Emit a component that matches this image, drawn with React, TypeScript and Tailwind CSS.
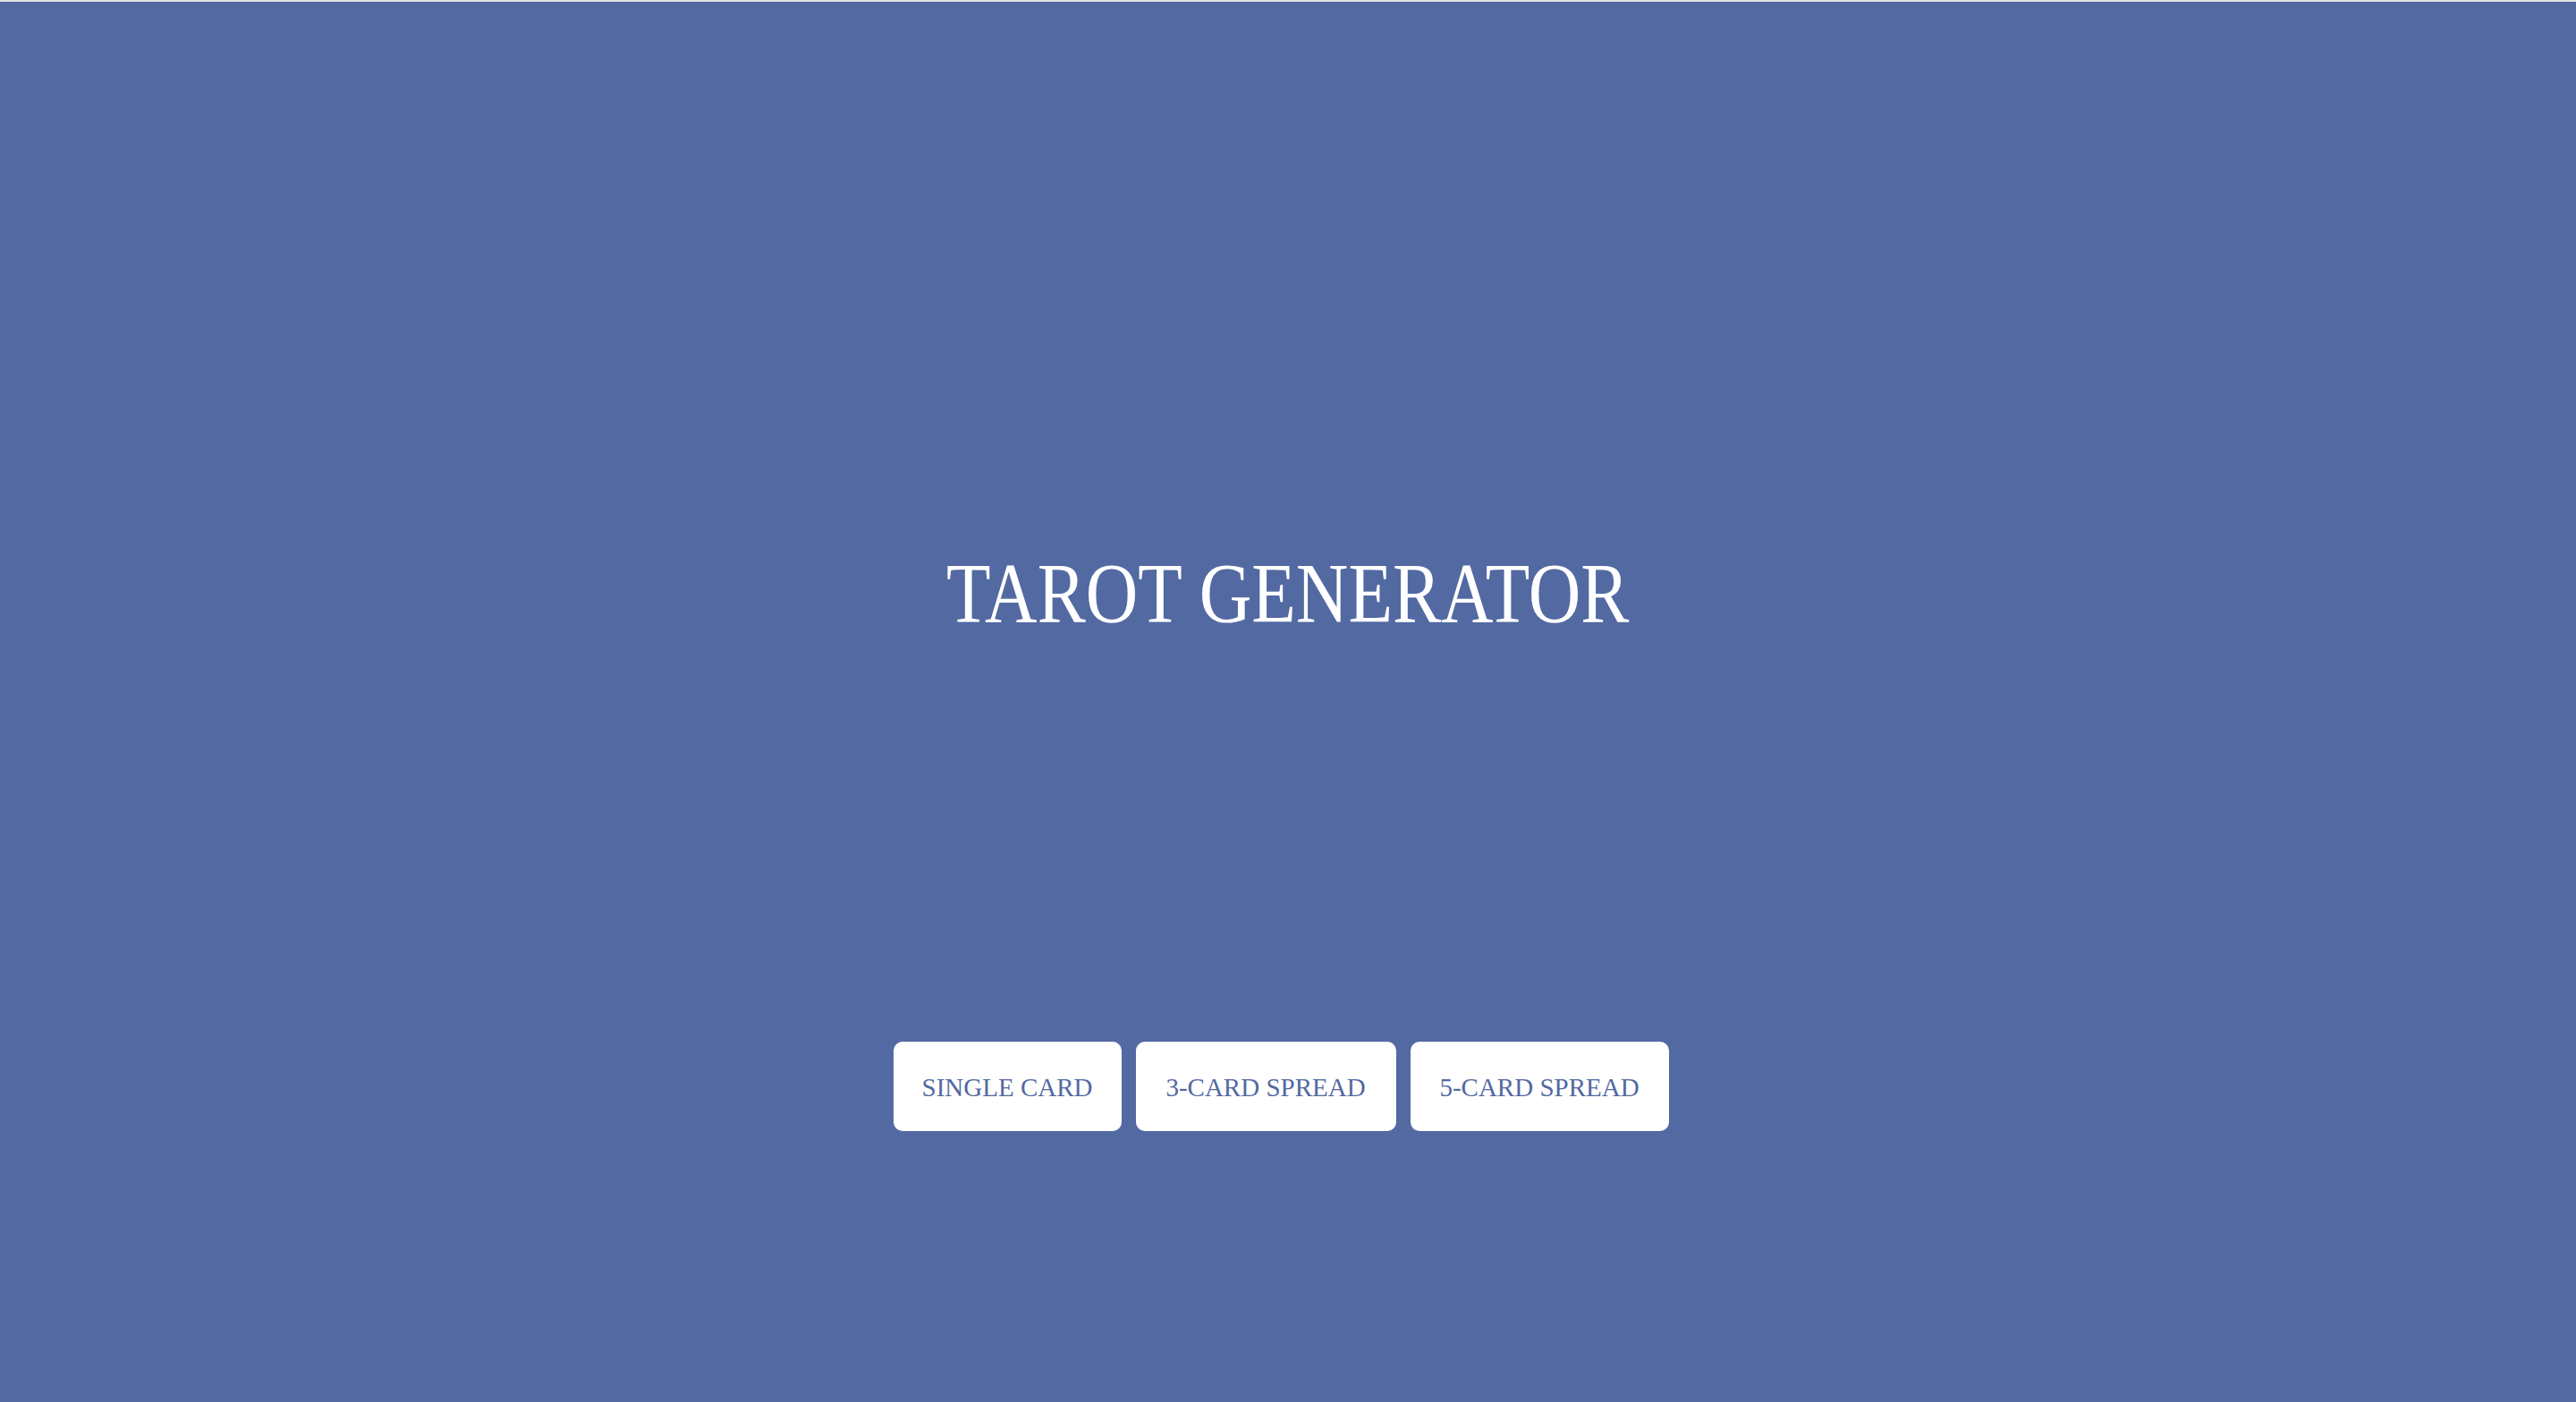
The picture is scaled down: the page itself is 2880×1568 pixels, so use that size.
import React from "react";

const serif = { fontFamily: '"Liberation Serif", "DejaVu Serif", serif' };

export default function App() {
  const buttons = [
    { label: "SINGLE CARD", w: "w-[255px]" },
    { label: "3-CARD SPREAD", w: "w-[291px]" },
    { label: "5-CARD SPREAD", w: "w-[289px]" },
  ];
  return (
    <div className="min-h-screen w-full bg-[#5269a2] flex flex-col" style={serif}>
      <div className="h-[2px] w-full bg-[#e3e3e3]" />
      <div className="pt-[614px] flex justify-center">
        <h1 className="text-[96px] leading-none font-normal text-white whitespace-nowrap scale-x-[0.845]">
          TAROT GENERATOR
        </h1>
      </div>
      <div className="mt-[453px] flex justify-center">
        {buttons.map((b) => (
          <button
            key={b.label}
            className={`${b.w} h-[100px] mr-4 rounded-[10px] bg-white flex items-center justify-center pt-[2px] text-[29px] leading-none text-[#5269a2] whitespace-nowrap`}
            style={serif}
          >
            {b.label}
          </button>
        ))}
      </div>
    </div>
  );
}
